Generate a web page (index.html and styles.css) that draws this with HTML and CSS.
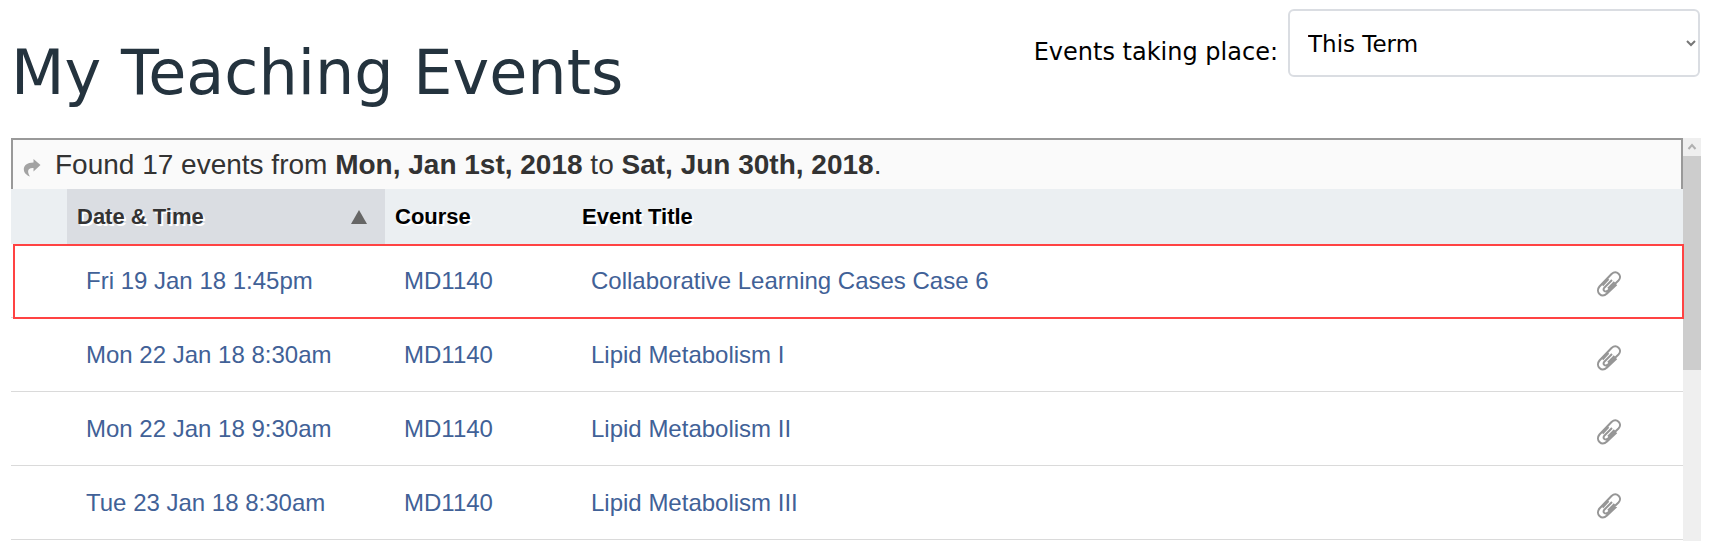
FILE: index.html
```html
<!DOCTYPE html>
<html lang="en">
<head>
    <meta charset="UTF-8">
    <title>My Teaching Events</title>
    <link rel="stylesheet" href="styles.css">
</head>
<body>
<svg class="sprite" aria-hidden="true">
    <symbol id="clip" viewBox="0 0 26 28">
        <path d="M20.500 14.500L11 23.500C5.500 28.500-1 22 3.500 16.500L15.500 4C20.500-.5 27 5.500 22.500 10.500L12 20.500C9 23 6 20 8.500 17.500L16 10"/>
        <path d="M12.500 9L6.500 15.500M18.500 12L12 18.500"/>
    </symbol>
</svg>
<div class="header">
    <h1>My Teaching Events</h1>
    <div class="filter">
        <label for="term">Events taking place:</label>
        <div class="select_box">
            <select id="term">
                <option>This Term</option>
            </select>
            <svg class="chevron" viewBox="0 0 10 8"><path d="M1 2l4 4 4-4"/></svg>
        </div>
    </div>
</div>
<div class="events">
    <div class="list">
        <div class="summary">
            <svg viewBox="0 0 18 20"><path d="M10.500 1L17.500 7l-7 6.500v-3.500C5 9.500 3.500 13 7 18.500-2 15.500-1.500 4.500 10.500 4.500z"/></svg>
            <p>Found 17 events from <b>Mon, Jan 1st, 2018</b> to <b>Sat, Jun 30th, 2018</b>.</p>
        </div>
        <table>
            <thead>
            <tr>
                <th class="mark"></th>
                <th class="date sorted"><div>Date &amp; Time<svg viewBox="0 0 16 14"><path d="M8 0l8 14H0z"/></svg></div></th>
                <th class="course">Course</th>
                <th class="title">Event Title</th>
                <th class="file"></th>
            </tr>
            </thead>
            <tbody>
            <tr class="active">
                <td></td>
                <td><a href="#">Fri 19 Jan 18 1:45pm</a></td>
                <td><a href="#">MD1140</a></td>
                <td><a href="#">Collaborative Learning Cases Case 6</a></td>
                <td><svg class="clip"><use href="#clip"/></svg></td>
            </tr>
            <tr>
                <td></td>
                <td><a href="#">Mon 22 Jan 18 8:30am</a></td>
                <td><a href="#">MD1140</a></td>
                <td><a href="#">Lipid Metabolism I</a></td>
                <td><svg class="clip"><use href="#clip"/></svg></td>
            </tr>
            <tr>
                <td></td>
                <td><a href="#">Mon 22 Jan 18 9:30am</a></td>
                <td><a href="#">MD1140</a></td>
                <td><a href="#">Lipid Metabolism II</a></td>
                <td><svg class="clip"><use href="#clip"/></svg></td>
            </tr>
            <tr>
                <td></td>
                <td><a href="#">Tue 23 Jan 18 8:30am</a></td>
                <td><a href="#">MD1140</a></td>
                <td><a href="#">Lipid Metabolism III</a></td>
                <td><svg class="clip"><use href="#clip"/></svg></td>
            </tr>
            </tbody>
        </table>
    </div>
    <div class="scrollbar">
        <svg viewBox="0 0 18 18"><path d="M5.500 11l3.500-4 3.500 4"/></svg>
        <div class="thumb"></div>
    </div>
</div>
</body>
</html>
```

FILE: styles.css
```css
* {
    box-sizing: border-box;
    margin: 0;
    padding: 0;
}
body {
    padding: 9px 14px 0 11px;
    font-family: "Liberation Sans", Arial, sans-serif;
    font-size: 24px;
    color: #333;
    background: #fff;
}
.sprite {
    display: none;
}
.header {
    display: flex;
    justify-content: space-between;
    height: 129px;
    font-family: "DejaVu Sans", Verdana, sans-serif;
}
.header h1 {
    padding-top: 28px;
    font-size: 62px;
    line-height: 72px;
    font-weight: normal;
    color: #24333e;
}
.filter {
    display: flex;
    gap: 10px;
    padding-right: 1px;
    color: #000;
}
.filter label {
    padding-top: 29px;
    line-height: 28px;
}
.select_box {
    position: relative;
    width: 412px;
}
.select_box select {
    width: 100%;
    height: 68px;
    padding: 2px 18px 0;
    font: inherit;
    font-size: 23px;
    color: #000;
    background: #fff;
    border: 2px #dadde2 solid;
    border-radius: 6px;
    appearance: none;
}
.select_box .chevron {
    position: absolute;
    top: 30px;
    right: 4px;
    width: 10px;
    height: 8px;
    fill: none;
    stroke: #777;
    stroke-width: 2;
    pointer-events: none;
}
.events {
    display: flex;
}
.list {
    flex: 1;
    padding-bottom: 1px;
}
.summary {
    display: flex;
    align-items: center;
    height: 51px;
    padding-left: 10px;
    gap: 14px;
    font-size: 28px;
    background: #fafafa;
    border: 2px #999 solid;
    border-bottom: 0;
}
.summary svg {
    width: 18px;
    height: 20px;
    margin-top: 6px;
    fill: #a3a3a3;
}
table {
    width: 100%;
    table-layout: fixed;
    border-collapse: separate;
    border-spacing: 0;
}
th {
    height: 55px;
    padding: 0 10px;
    font-size: 22px;
    text-align: left;
    color: #000;
    background: #ebeff2;
    text-shadow: 2px 2px 0 #fff;
}
th.mark {
    width: 56px;
}
th.date {
    width: 318px;
}
th.course {
    width: 187px;
}
th.file {
    width: 96px;
}
th.sorted {
    color: #333;
    background: #dadde2;
}
th.sorted div {
    display: flex;
    justify-content: space-between;
    align-items: center;
}
th.sorted svg {
    width: 16px;
    height: 14px;
    margin-right: 8px;
    fill: #666;
}
td {
    height: 74px;
    padding: 0 19px;
    border-bottom: 1px #dadada solid;
}
td:last-child {
    padding: 6px 0 0 9px;
}
td a {
    color: #416197;
    text-decoration: none;
}
.clip {
    display: block;
    width: 26px;
    height: 28px;
    fill: none;
    stroke: #969696;
    stroke-width: 2;
}
tr.active {
    position: relative;
}
tr.active td:first-child::after {
    content: "";
    position: absolute;
    top: 0;
    right: -1px;
    bottom: -1px;
    left: 2px;
    border: 2px #ff4343 solid;
}
.scrollbar {
    width: 18px;
    background: #efefef;
}
.scrollbar svg {
    display: block;
    width: 18px;
    height: 18px;
    fill: none;
    stroke: #b0b0b0;
    stroke-width: 2;
}
.scrollbar .thumb {
    height: 214px;
    background: #cdcdcd;
}
```
